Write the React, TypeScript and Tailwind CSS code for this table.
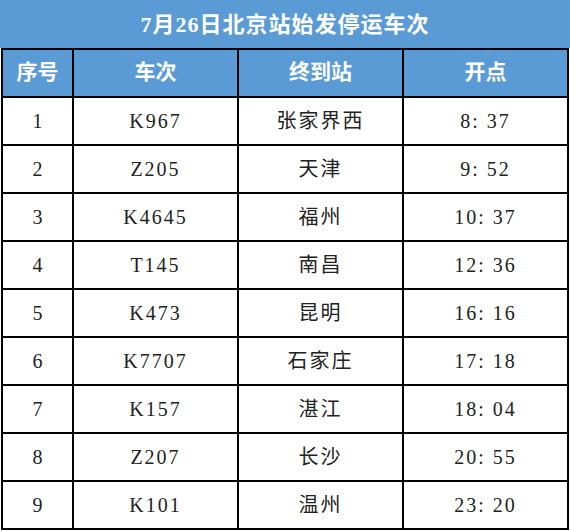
import React from 'react';

type Train = { no: string; train: string; dest: string; time: string };

const trains: Train[] = [
  { no: '1', train: 'K967', dest: '张家界西', time: '8: 37' },
  { no: '2', train: 'Z205', dest: '天津', time: '9: 52' },
  { no: '3', train: 'K4645', dest: '福州', time: '10: 37' },
  { no: '4', train: 'T145', dest: '南昌', time: '12: 36' },
  { no: '5', train: 'K473', dest: '昆明', time: '16: 16' },
  { no: '6', train: 'K7707', dest: '石家庄', time: '17: 18' },
  { no: '7', train: 'K157', dest: '湛江', time: '18: 04' },
  { no: '8', train: 'Z207', dest: '长沙', time: '20: 55' },
  { no: '9', train: 'K101', dest: '温州', time: '23: 20' },
];

const font = { fontFamily: '"Liberation Serif", "Noto Sans CJK SC", serif' };

const App = () => {
  return (
    <div className="w-[570px] h-[531px] bg-white" style={font}>
      <div className="h-[48px] bg-[#5b9bd5] flex items-center justify-center text-white font-bold text-[22px] tracking-[1px]">
        7月26日北京站始发停运车次
      </div>
      <div className="ml-[1px] w-[568px] border-l-2 border-r-2 border-b-2 border-black">
        <div className="grid grid-cols-[71px_165px_165px_163px] h-[48px] bg-[#5b9bd5] text-white font-bold text-[21px] border-t-2 border-black">
          <div className="flex items-center justify-center border-r-2 border-black">序号</div>
          <div className="flex items-center justify-center border-r-2 border-black">车次</div>
          <div className="flex items-center justify-center border-r-2 border-black">终到站</div>
          <div className="flex items-center justify-center">开点</div>
        </div>
        {trains.map(t => (
          <div key={t.no} className="grid grid-cols-[71px_165px_165px_163px] h-[48px] border-t-2 border-black text-[#222] text-[20px]">
            <div className="flex items-center justify-center border-r-2 border-black">{t.no}</div>
            <div className="flex items-center justify-center border-r-2 border-black tracking-[2px]">{t.train}</div>
            <div className="flex items-center justify-center border-r-2 border-black tracking-[2px]">{t.dest}</div>
            <div className="flex items-center justify-center tracking-[2px]">{t.time}</div>
          </div>
        ))}
      </div>
    </div>
  );
};

export default App;
